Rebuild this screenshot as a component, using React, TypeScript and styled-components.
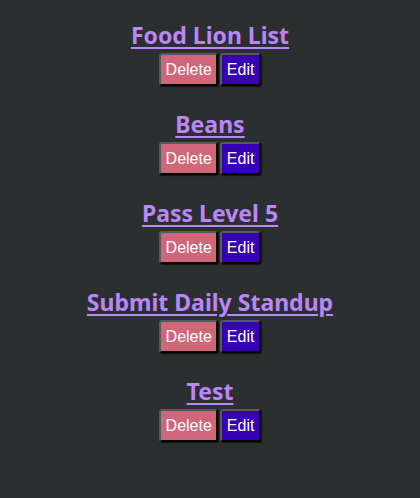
import React from "react";
import styled, { createGlobalStyle } from "styled-components";

const Global = createGlobalStyle`
  html, body {
    margin: 0;
    padding: 0;
    background: #2b2f30;
  }
  body {
    font-family: "Liberation Sans", Arial, sans-serif;
  }
`;

const Page = styled.main`
  min-height: 498px;
  box-sizing: border-box;
  padding-top: 20px;
  display: flex;
  flex-direction: column;
  align-items: center;
  gap: 23px;
`;

const Item = styled.section`
  display: flex;
  flex-direction: column;
  align-items: center;
  gap: 3px;
`;

const Title = styled.a`
  font-family: "Noto Sans", "Open Sans", sans-serif;
  font-weight: 700;
  font-size: 23px;
  line-height: 30px;
  color: #bb86fc;
  text-decoration: underline;
  text-decoration-thickness: 2px;
  text-underline-offset: 3px;
  cursor: pointer;
`;

const Actions = styled.div`
  display: flex;
  gap: 2px;
`;

const Button = styled.button<{ $variant: "delete" | "edit" }>`
  font-family: "Liberation Sans", Arial, sans-serif;
  font-size: 16px;
  line-height: 19px;
  color: #ffffff;
  background: ${(p) => (p.$variant === "delete" ? "#cf6679" : "#3700b3")};
  border: 2px outset #555a5b;
  border-radius: 3px;
  padding: 5px 4.5px;
  box-shadow: 1px 1px 1px #111;
  cursor: pointer;
`;

const items = ["Food Lion List", "Beans", "Pass Level 5", "Submit Daily Standup", "Test"];

export default function App() {
  return (
    <>
      <Global />
      <Page>
        {items.map((t) => (
          <Item key={t}>
            <Title>{t}</Title>
            <Actions>
              <Button $variant="delete">Delete</Button>
              <Button $variant="edit">Edit</Button>
            </Actions>
          </Item>
        ))}
      </Page>
    </>
  );
}
